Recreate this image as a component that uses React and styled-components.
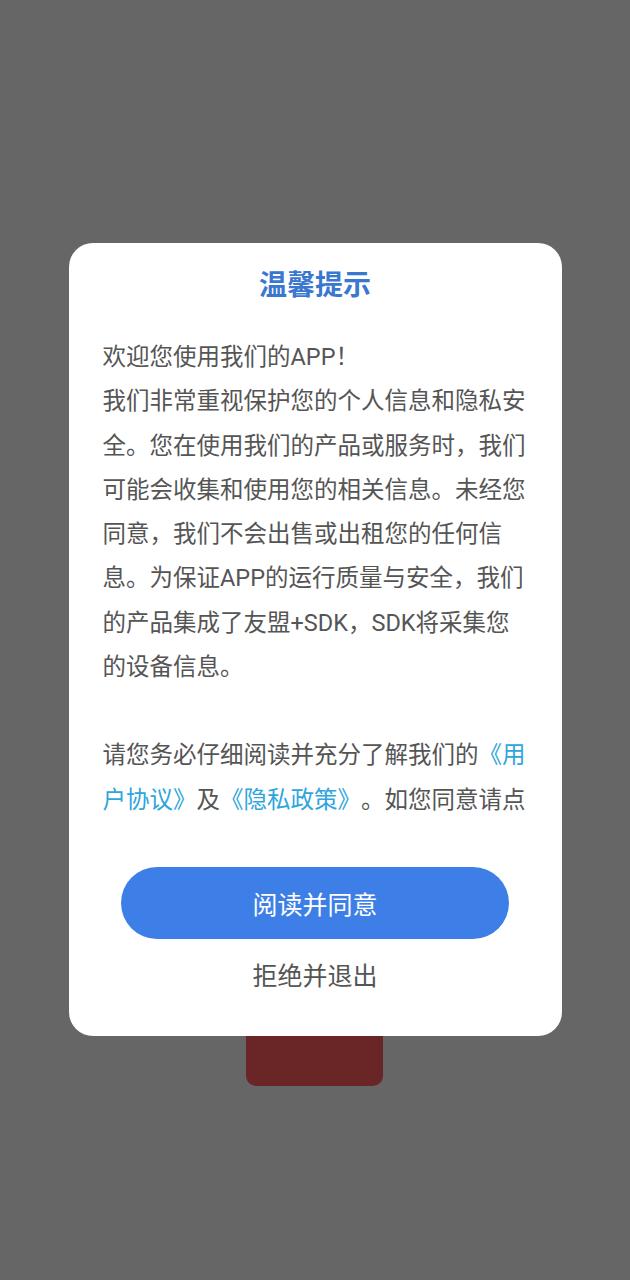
import styled, { createGlobalStyle } from "styled-components";

const GlobalStyle = createGlobalStyle`
  html, body {
    margin: 0;
    padding: 0;
    background: #666666;
  }
  body {
    font-family: Roboto, "Noto Sans CJK SC", sans-serif;
    text-spacing-trim: space-all;
  }
`;

// pagina sotto l'overlay
const Page = styled.div`
  width: 630px;
  height: 1280px;
  background: #666666;
  display: flex;
  flex-direction: column;
  align-items: center;
  padding-top: 990px;
  box-sizing: border-box;
`;

const RedBlock = styled.div`
  width: 137px;
  height: 96px;
  margin-left: -1px;
  background: #6a2626;
  border-radius: 0 0 10px 10px;
`;

// overlay e card
const Overlay = styled.div`
  position: fixed;
  inset: 0;
  display: flex;
  justify-content: center;
  align-items: flex-start;
  padding-top: 243px;
`;

const Card = styled.div`
  width: 493px;
  background: #ffffff;
  border-radius: 24px;
  padding: 24px 0 39px;
  box-sizing: border-box;
  display: flex;
  flex-direction: column;
  align-items: center;
`;

const Title = styled.h2`
  margin: 0;
  height: 38px;
  line-height: 38px;
  font-size: 28px;
  font-weight: 700;
  color: #3a78d0;
`;

const Scroll = styled.div`
  margin-top: 30px;
  width: 424px;
  height: 490px;
  overflow: hidden;
  align-self: flex-start;
  margin-left: 34px;
`;

const Para = styled.p`
  margin: 0 0 ${(p) => (p.$gap ? "44px" : "0")};
  font-size: 23.5px;
  line-height: 44.3px;
  color: #555555;
  white-space: nowrap;
`;

const Link = styled.span`
  color: #2ea6dd;
`;

const AgreeButton = styled.button`
  margin-top: 42px;
  width: 388px;
  height: 72px;
  border: none;
  border-radius: 36px;
  background: #3d7fe6;
  color: #ffffff;
  font-family: inherit;
  font-size: 25px;
  cursor: pointer;
`;

const Decline = styled.button`
  margin-top: 18px;
  height: 40px;
  border: none;
  background: none;
  padding: 0;
  font-family: inherit;
  font-size: 25px;
  line-height: 40px;
  color: #555555;
  cursor: pointer;
`;

const App = () => {
  return (
    <>
      <GlobalStyle />
      <Page>
        <RedBlock />
      </Page>

      <Overlay>
        <Card>
          <Title>温馨提示</Title>
          <Scroll>
            <Para>欢迎您使用我们的APP！</Para>
            <Para $gap>
              我们非常重视保护您的个人信息和隐私安
              <br />
              全。您在使用我们的产品或服务时，我们
              <br />
              可能会收集和使用您的相关信息。未经您
              <br />
              同意，我们不会出售或出租您的任何信
              <br />
              息。为保证APP的运行质量与安全，我们
              <br />
              的产品集成了友盟+SDK，SDK将采集您
              <br />
              的设备信息。
            </Para>
            <Para>
              请您务必仔细阅读并充分了解我们的<Link>《用</Link>
              <br />
              <Link>户协议》</Link>及<Link>《隐私政策》</Link>。如您同意请点
            </Para>
          </Scroll>
          <AgreeButton>阅读并同意</AgreeButton>
          <Decline>拒绝并退出</Decline>
        </Card>
      </Overlay>
    </>
  );
};

export default App;
